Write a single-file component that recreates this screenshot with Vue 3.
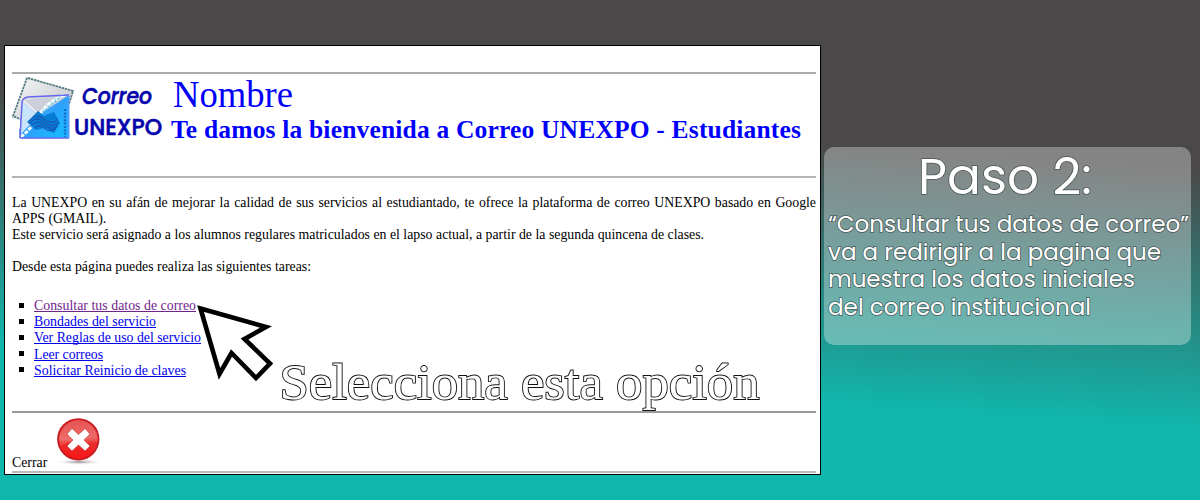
<script setup>
const links = [
  { label: 'Consultar tus datos de correo', width: 162, visited: true },
  { label: 'Bondades del servicio', width: 122 },
  { label: 'Ver Reglas de uso del servicio', width: 167 },
  { label: 'Leer correos', width: 69 },
  { label: 'Solicitar Reinicio de claves', width: 152 },
]
const lines = [
  { text: '“Consultar tus datos de correo”', width: 361, y: 85 },
  { text: 'va a redirigir a la pagina que', width: 333, y: 113 },
  { text: 'muestra los datos iniciales', width: 307, y: 140 },
  { text: 'del correo institucional', width: 263, y: 168 },
]
</script>

<template>
  <div class="scene">
    <main class="window">
      <header class="head">
        <svg class="logo" width="155" height="74" viewBox="12 74 155 74">
          <defs>
            <linearGradient id="paper" x1="0" y1="0" x2="1" y2="1">
              <stop offset="0" stop-color="#f7f7f7" />
              <stop offset="1" stop-color="#b9bcc2" />
            </linearGradient>
            <linearGradient id="blue" x1="0" y1="0" x2="1" y2="1">
              <stop offset="0" stop-color="#8fcfff" />
              <stop offset=".5" stop-color="#2fa0fb" />
              <stop offset="1" stop-color="#12c0ff" />
            </linearGradient>
          </defs>
          <path d="M27 78 73 91 61 128 13 117Z" fill="url(#paper)" stroke="#c8d4d4" stroke-width="2" />
          <path d="M28 78 73 91 69 104M27 78 13 116l9 4" fill="none" stroke="#507681" stroke-width="1.6" stroke-dasharray="2.2 1" />
          <path d="M22 100 69 95V138H19Z" fill="#ccd0da" />
          <path d="M69 95V138H20L19 130 37 116Z" fill="url(#blue)" />
          <path d="M22 101 38 116 20 135Z" fill="#c8e4fa" />
          <path d="M64 95 Q48 101 38 117T20 137" fill="none" stroke="#f3ffff" stroke-width="3" stroke-dasharray="4 1.2" />
          <path d="M59 98 37 117" stroke="#4fc4ee" stroke-width="1.5" stroke-dasharray="2 2" />
          <path d="M23 100 36 112" stroke="#f1f3fa" stroke-width="1.5" />
          <path d="M20 138 22 103Q22 98 28 97L69 95M20 138H69" fill="none" stroke="#6666ef" stroke-width="1.5" />
          <path d="M27 122 38 111 44 116 54 112 60 123 54 133 44 128 36 130Z" fill="#087bd3" />
          <path d="M29 121Q36 112 44 119T58 119M29 124Q36 115 44 122T59 122M31 126Q37 119 44 125T58 126M34 129Q39 123 44 128T56 129" fill="none" stroke="#2146a8" stroke-width=".9" />
          <path d="M68.5 96V138" stroke="#4a9cff" stroke-width="2" />
          <path d="M65 109V137" stroke="#176bd0" stroke-width="2.4" stroke-dasharray="2 1.4" />
          <g class="brand">
            <text x="82" y="104" textLength="70" lengthAdjust="spacingAndGlyphs" font-style="italic">Correo</text>
            <text x="74" y="135" textLength="88" lengthAdjust="spacingAndGlyphs">UNEXPO</text>
          </g>
        </svg>
        <svg class="titles" width="640" height="74" viewBox="167 74 640 74">
          <text x="173" y="107" font-size="37" textLength="120" lengthAdjust="spacingAndGlyphs">Nombre</text>
          <text x="171" y="137.500" font-size="25.500" font-weight="bold" textLength="630">Te damos la bienvenida a Correo UNEXPO - Estudiantes</text>
        </svg>
      </header>

      <section class="body">
        <p class="spread">La UNEXPO en su afán de mejorar la calidad de sus servicios al estudiantado, te ofrece la plataforma de correo UNEXPO basado en Google</p>
        <p>APPS (GMAIL).</p>
        <p><svg width="694" height="16"><text x="0" y="12" textLength="692">Este servicio será asignado a los alumnos regulares matriculados en el lapso actual, a partir de la segunda quincena de clases.</text></svg></p>
        <p class="tasks"><svg width="304" height="16"><text x="0" y="12" textLength="299">Desde esta página puedes realiza las siguientes tareas:</text></svg></p>
        <ul>
          <li v-for="l in links" :key="l.label">
            <a :class="{ visited: l.visited }">
              <svg :width="l.width" height="16"><text x="0" y="12" :textLength="l.width">{{ l.label }}</text></svg>
            </a>
          </li>
        </ul>
      </section>

      <footer class="foot">
        <span class="close-label">Cerrar</span>
        <svg width="56" height="56" viewBox="50 413 56 56">
          <defs>
            <linearGradient id="red" x1="0" y1="0" x2="0" y2="1">
              <stop offset="0" stop-color="#e23a3a" />
              <stop offset=".5" stop-color="#ee5a58" />
              <stop offset=".6" stop-color="#e92c2c" />
              <stop offset="1" stop-color="#fa1414" />
            </linearGradient>
            <radialGradient id="shade">
              <stop offset="0" stop-color="#888" />
              <stop offset="1" stop-color="#fff" stop-opacity="0" />
            </radialGradient>
          </defs>
          <ellipse cx="79" cy="462" rx="24" ry="3" fill="url(#shade)" />
          <circle cx="78.3" cy="439.3" r="20.3" fill="url(#red)" stroke="#c41c20" stroke-width="1.7" />
          <path d="M60 440a18.5 18.5 0 0 1 37-2Q80 437 60 446Z" fill="#fff" opacity=".12" />
          <path d="M67 434 72 428.500 78.500 434.500 85 428.500 90 434 84 440 90 446 85 451 78.500 445 72 451 67 446 73 440Z" fill="#fff" stroke="#bd3333" stroke-width=".6" />
        </svg>
      </footer>

      <svg class="annotation" width="580" height="125" viewBox="190 295 580 125">
        <path d="M200.500 308.500 266 327 244.500 339 270 363.500 256 378 231.500 353 219.500 374Z" fill="#fff" stroke="#000" stroke-width="4.600" />
        <text x="279.500" y="398.500" font-size="51" textLength="480" lengthAdjust="spacingAndGlyphs">Selecciona esta opción</text>
      </svg>
    </main>

    <aside class="step">
      <svg width="367" height="198">
        <text class="title" x="94" y="47" textLength="174" lengthAdjust="spacingAndGlyphs">Paso 2:</text>
        <text v-for="l in lines" :key="l.y" x="4" :y="l.y" :textLength="l.width" lengthAdjust="spacingAndGlyphs">{{ l.text }}</text>
      </svg>
    </aside>
  </div>
</template>

<style>
body { margin: 0; }
</style>

<style scoped>
.scene {
  width: 1200px;
  height: 500px;
  box-sizing: border-box;
  padding: 45px 0 0 4px;
  display: flex;
  align-items: flex-start;
  overflow: hidden;
  background: linear-gradient(184deg, #4a4848 0, #4a4848 29%, #10b7ac 74%, #10b7ac 100%);
}
svg { display: block; overflow: visible; }
.window {
  position: relative;
  box-sizing: border-box;
  width: 817px;
  height: 430px;
  border: 1px solid #000;
  background: #fff;
  padding: 26px 4px 0 7px;
  font: 13.8px/16px "Liberation Serif", serif;
  color: #000;
  flex: none;
}
.head {
  display: flex;
  height: 102px;
  border-top: 2px solid #aaa;
  border-bottom: 2px solid #b5b5b5;
}
.brand {
  font: 500 22.5px "Comic Sans MS", Poppins, sans-serif;
  fill: #0505ab;
  stroke: #0505ab;
  stroke-width: .6;
  stroke-linejoin: round;
}
.titles { font-family: "Liberation Serif", serif; fill: #0000fa; }
.body { height: 233px; padding-top: 17px; box-sizing: border-box; }
.body p { margin: 0; height: 16px; white-space: nowrap; }
.body .spread { text-align-last: justify; }
.body .tasks { margin-top: 16px; }
ul { margin: 22px 0 0; padding: 0; list-style: none; }
li { display: flex; align-items: center; height: 16.2px; padding-left: 7px; }
li::before { content: ""; width: 5px; height: 5px; background: #000; margin: 0 10px 0 0; }
a { color: #0000ee; fill: currentColor; border-bottom: 1px solid; height: 13px; }
.visited { color: #71238e; }
.foot {
  display: flex;
  height: 58px;
  border-top: 2px solid #999;
  border-bottom: 2px solid #bbb;
}
.close-label { width: 38px; padding-top: 42px; }
.annotation { position: absolute; left: 185px; top: 249px; }
.annotation text {
  font-family: "Liberation Serif", serif;
  fill: #fff;
  paint-order: stroke;
  stroke: #111;
  stroke-width: 1.8;
}
.step {
  margin: 102px 0 0 3px;
  width: 367px;
  height: 198px;
  border-radius: 10px;
  background: rgba(255, 255, 255, .33);
  flex: none;
}
.step text {
  font-family: Poppins, Lato, sans-serif;
  font-size: 23px;
  fill: #fff;
  paint-order: stroke;
  stroke: rgba(50, 60, 60, .7);
  stroke-width: 1.6px;
}
.step .title { font-size: 49.5px; }
</style>
